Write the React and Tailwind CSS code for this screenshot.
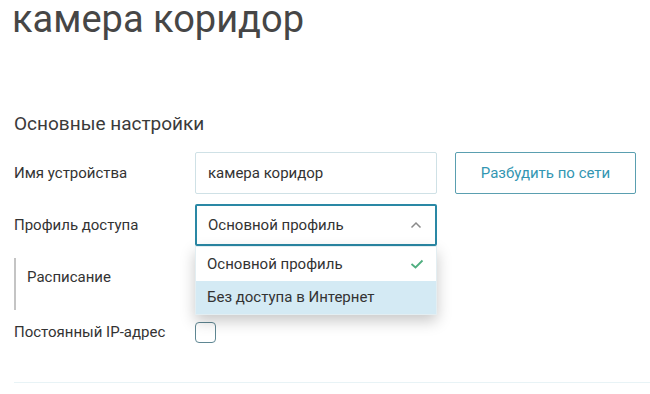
import React from "react";

const App = () => {
  return (
    <div className="w-[650px] h-[394px] overflow-hidden bg-white text-[#333] font-['Roboto',sans-serif]">
      <div className="pl-[12px]">
        <h1 className="text-[38px] leading-[38px] text-[#464646] font-normal">камера коридор</h1>
      </div>
      <div className="pl-[14px] pt-[74px]">
        <h2 className="text-[19px] leading-[24px] text-[#3a3a3a]">Основные настройки</h2>

        <div className="mt-[16px] flex items-center h-[42px]">
          <div className="w-[181px] text-[15px] text-[#333]">Имя устройства</div>
          <input
            defaultValue="камера коридор"
            className="w-[242px] h-[42px] border border-[#cfe1e6] rounded-[2px] px-[12px] text-[15px] text-[#333] outline-none"
          />
          <button className="ml-[18px] w-[181px] h-[42px] border border-[#5a9fb0] rounded-[2px] text-[15px] text-[#3396b2]">
            Разбудить по сети
          </button>
        </div>

        <div className="mt-[10px] flex items-center h-[42px]">
          <div className="w-[181px] text-[15px] text-[#333]">Профиль доступа</div>
          <div className="relative">
            <div className="w-[242px] h-[42px] border-2 border-[#2a88a5] rounded-[2px] px-[11px] flex items-center justify-between text-[15px] text-[#333]">
              <span>Основной профиль</span>
              <svg width="12" height="8" viewBox="0 0 12 8" className="mr-[2px]">
                <path d="M1.5 6.5 L6 2 L10.5 6.5" fill="none" stroke="#8a8a8a" strokeWidth="1.5" />
              </svg>
            </div>
            <div className="absolute left-0 top-[42px] w-[242px] bg-white shadow-[0_6px_14px_rgba(0,0,0,0.22)] border border-[#e3eef2] text-[15px] text-[#333] z-10">
              <div className="h-[34px] px-[11px] flex items-center justify-between">
                <span>Основной профиль</span>
                <svg width="14" height="10" viewBox="0 0 14 10" className="mr-[1px]">
                  <path d="M1.5 5 L5.5 8.5 L12.5 1.5" fill="none" stroke="#4fae7f" strokeWidth="1.8" />
                </svg>
              </div>
              <div className="h-[33px] px-[11px] flex items-center bg-[#d4eaf4]">
                <span>Без доступа в Интернет</span>
              </div>
            </div>
          </div>
        </div>

        <div className="mt-[12px] h-[52px] border-l-[2px] border-[#c4c4c4] pl-[11px] pt-[10px]">
          <span className="block text-[15px] leading-[18px] text-[#333]">Расписание</span>
        </div>

        <div className="mt-[11px] flex items-center h-[22px]">
          <div className="w-[181px] text-[15px] text-[#333]">Постоянный IP-адрес</div>
          <div className="w-[21px] h-[21px] border border-[#5f8793] rounded-[4px]"></div>
        </div>

        <div className="mt-[39px] h-px bg-[#e8f3f6]"></div>
      </div>
    </div>
  );
};

export default App;
